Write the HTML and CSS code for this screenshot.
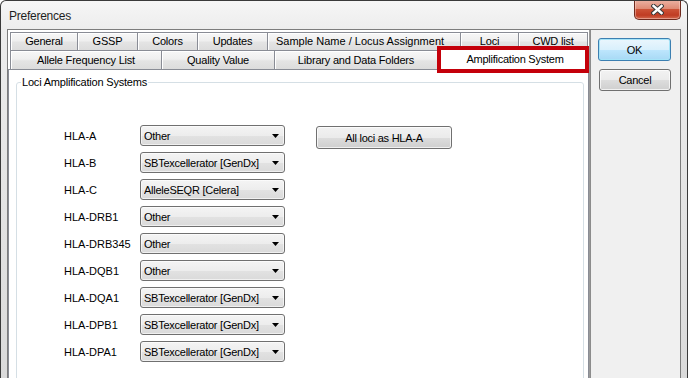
FILE: index.html
```html
<!DOCTYPE html>
<html>
<head>
<meta charset="utf-8">
<title>Preferences</title>
<link rel="stylesheet" href="styles.css">
</head>
<body>
<div class="window">
  <div class="titlebar">
    <span class="title">Preferences</span>
    <div class="close">
      <svg width="13" height="11" viewBox="0 0 13 11">
        <path d="M2.5 2 L10.5 9 M10.5 2 L2.5 9" stroke="#3a3a3a" stroke-width="4.4" stroke-linecap="square" fill="none"/>
        <path d="M2.5 2 L10.5 9 M10.5 2 L2.5 9" stroke="#ffffff" stroke-width="2.4" stroke-linecap="square" fill="none"/>
      </svg>
    </div>
  </div>
  <div class="client">
    <div class="left">
      <div class="tabrow row1">
        <div class="tab w68">General</div>
        <div class="tab w61">GSSP</div>
        <div class="tab w61">Colors</div>
        <div class="tab w71">Updates</div>
        <div class="tab wide w194">Sample Name / Locus Assignment</div>
        <div class="tab w59">Loci</div>
        <div class="tab w70">CWD list</div>
      </div>
      <div class="tabrow row2">
        <div class="tab w152">Allele Frequency List</div>
        <div class="tab w114">Quality Value</div>
        <div class="tab w164">Library and Data Folders</div>
        <div class="tab selected w152">Amplification System<div class="annot"></div></div>
      </div>
      <div class="tabpage">
        <fieldset class="group">
          <legend class="legend">Loci Amplification Systems</legend>
          <div class="grid">
            <div class="label">HLA-A</div>
            <div class="combo"><span class="val">Other</span><svg class="arrow" width="7" height="4" viewBox="0 0 7 4"><path d="M0 0H7L3.5 4Z" fill="#000"/></svg></div>
            <div class="spacer"></div>
            <button class="btn all">All loci as HLA-A</button>

            <div class="label">HLA-B</div>
            <div class="combo"><span class="val">SBTexcellerator [GenDx]</span><svg class="arrow" width="7" height="4" viewBox="0 0 7 4"><path d="M0 0H7L3.5 4Z" fill="#000"/></svg></div>
            <div class="spacer"></div><div class="spacer"></div>

            <div class="label">HLA-C</div>
            <div class="combo"><span class="val">AlleleSEQR [Celera]</span><svg class="arrow" width="7" height="4" viewBox="0 0 7 4"><path d="M0 0H7L3.5 4Z" fill="#000"/></svg></div>
            <div class="spacer"></div><div class="spacer"></div>

            <div class="label">HLA-DRB1</div>
            <div class="combo"><span class="val">Other</span><svg class="arrow" width="7" height="4" viewBox="0 0 7 4"><path d="M0 0H7L3.5 4Z" fill="#000"/></svg></div>
            <div class="spacer"></div><div class="spacer"></div>

            <div class="label">HLA-DRB345</div>
            <div class="combo"><span class="val">Other</span><svg class="arrow" width="7" height="4" viewBox="0 0 7 4"><path d="M0 0H7L3.5 4Z" fill="#000"/></svg></div>
            <div class="spacer"></div><div class="spacer"></div>

            <div class="label">HLA-DQB1</div>
            <div class="combo"><span class="val">Other</span><svg class="arrow" width="7" height="4" viewBox="0 0 7 4"><path d="M0 0H7L3.5 4Z" fill="#000"/></svg></div>
            <div class="spacer"></div><div class="spacer"></div>

            <div class="label">HLA-DQA1</div>
            <div class="combo"><span class="val">SBTexcellerator [GenDx]</span><svg class="arrow" width="7" height="4" viewBox="0 0 7 4"><path d="M0 0H7L3.5 4Z" fill="#000"/></svg></div>
            <div class="spacer"></div><div class="spacer"></div>

            <div class="label">HLA-DPB1</div>
            <div class="combo"><span class="val">SBTexcellerator [GenDx]</span><svg class="arrow" width="7" height="4" viewBox="0 0 7 4"><path d="M0 0H7L3.5 4Z" fill="#000"/></svg></div>
            <div class="spacer"></div><div class="spacer"></div>

            <div class="label">HLA-DPA1</div>
            <div class="combo"><span class="val">SBTexcellerator [GenDx]</span><svg class="arrow" width="7" height="4" viewBox="0 0 7 4"><path d="M0 0H7L3.5 4Z" fill="#000"/></svg></div>
            <div class="spacer"></div><div class="spacer"></div>
          </div>
        </fieldset>
      </div>
    </div>
    <div class="side">
      <button class="btn ok">OK</button>
      <button class="btn cancel">Cancel</button>
    </div>
  </div>
</div>
</body>
</html>
```
FILE: styles.css
```css
html, body {
  margin: 0;
  padding: 0;
  height: 378px;
  overflow: hidden;
  background: #ffffff;
}
body {
  font-family: "Liberation Sans", Arial, sans-serif;
  font-size: 11px;
  color: #000;
}
.window {
  width: 688px;
  height: 378px;
  overflow: hidden;
  box-sizing: border-box;
  border: 1px solid #3a3a3a;
  border-bottom: none;
  border-radius: 6px 6px 0 0;
  background: linear-gradient(to bottom, #f6f6f6 0px, #ececec 30px, #dadada 100%);
  display: flex;
  flex-direction: column;
}
.titlebar {
  height: 28px;
  flex: none;
  display: flex;
  align-items: flex-start;
  padding-left: 8px;
}
.title {
  align-self: center;
  font-size: 12px;
  line-height: 16px;
  letter-spacing: -0.25px;
  color: #1e1e1e;
  margin-top: 1px;
}
.close {
  margin-left: auto;
  margin-right: 6px;
  margin-top: -1px;
  width: 47px;
  height: 20px;
  box-sizing: border-box;
  border: 1px solid #6e2a1e;
  border-top: none;
  border-radius: 0 0 5px 5px;
  background: linear-gradient(to bottom, #ecb3a4 0%, #df8b75 45%, #cc5136 50%, #c03c23 80%, #d2694f 100%);
  box-shadow: inset 0 0 0 1px rgba(255, 220, 210, 0.45);
  display: flex;
  align-items: center;
  justify-content: center;
}
.client {
  flex: 1;
  min-height: 0;
  margin: 0 6px;
  border: 1px solid #7c7c7c;
  border-bottom: none;
  display: flex;
  background: #fff;
}
.left {
  width: 581px;
  flex: none;
  display: flex;
  flex-direction: column;
  padding-top: 2px;
  background: #fff;
  min-height: 0;
}
.tabrow {
  display: flex;
  padding-left: 2px;
  flex: none;
}
.row1 { height: 18px; }
.row2 { height: 19px; }
.tab {
  box-sizing: border-box;
  height: 100%;
  margin-right: -1px;
  border: 1px solid #898c95;
  border-bottom: none;
  background: linear-gradient(to bottom, #f7f7f7 0%, #efefef 45%, #e4e4e4 55%, #dcdcdc 100%);
  box-shadow: inset 1px 1px 0 #ffffff;
  text-align: center;
  white-space: nowrap;
  letter-spacing: -0.2px;
}
.tab.wide {
  letter-spacing: 0;
  text-indent: -8px;
}
.row1 .tab { line-height: 17px; }
.row2 .tab { line-height: 18px; }
.w59 { width: 59px; }
.w61 { width: 61px; }
.w68 { width: 68px; }
.w70 { width: 70px; }
.w71 { width: 71px; }
.w114 { width: 114px; }
.w152 { width: 152px; }
.w164 { width: 164px; }
.w194 { width: 194px; }
.row2 .tab.selected {
  position: relative;
  z-index: 2;
  margin-top: -2px;
  height: 22px;
  line-height: 20px;
  background: #fff;
  box-shadow: none;
  letter-spacing: -0.25px;
  text-indent: 4px;
}
.annot {
  position: absolute;
  left: -1px;
  right: -1px;
  top: -3px;
  bottom: -3px;
  border: 4px solid #c4000a;
}
.tabpage {
  flex: 1;
  min-height: 0;
  overflow: hidden;
  border: 1px solid #898c95;
  border-bottom: none;
  background: #fff;
  display: flex;
  flex-direction: column;
}
.group {
  margin: 6px 4px 0 7px;
  padding: 36px 0 0 4px;
  border: 1px solid #d5dfe5;
  border-radius: 3px;
  flex: none;
  height: 330px;
  box-sizing: border-box;
  min-width: 0;
}
.legend {
  padding: 0 1px;
  line-height: 13px;
  letter-spacing: -0.2px;
  color: #000;
}
.grid {
  display: grid;
  margin-left: 43px;
  grid-template-columns: 76px 145px 31px 136px;
  grid-auto-rows: 21px;
  row-gap: 6px;
}
.label {
  align-self: center;
  white-space: nowrap;
}
.combo {
  box-sizing: border-box;
  height: 21px;
  border: 1px solid #707070;
  border-radius: 3px;
  background: linear-gradient(to bottom, #f4f4f4 0%, #ededed 50%, #e2e2e2 51%, #dadada 100%);
  box-shadow: inset 0 0 0 1px rgba(255, 255, 255, 0.6);
  display: flex;
  align-items: center;
  padding: 0 5px 0 3px;
}
.val {
  flex: 1;
  white-space: nowrap;
  overflow: hidden;
  letter-spacing: -0.25px;
}
.arrow {
  flex: none;
  display: block;
}
.btn {
  font-family: "Liberation Sans", Arial, sans-serif;
  font-size: 11px;
  color: #000;
  box-sizing: border-box;
  border: 1px solid #707070;
  border-radius: 3px;
  background: linear-gradient(to bottom, #f2f2f2 0%, #ebebeb 50%, #dddddd 51%, #cfcfcf 100%);
  box-shadow: inset 0 0 0 1px rgba(255, 255, 255, 0.7);
  padding: 0;
  margin: 0;
  letter-spacing: -0.25px;
}
.all {
  height: 23px;
  margin-top: 1px;
}
.side {
  flex: 1;
  border-left: 1px solid #9a9a9a;
  box-shadow: inset 1px 0 0 #8c8c8c;
  background: #f0f0f0;
  display: flex;
  flex-direction: column;
  align-items: flex-start;
  padding-top: 8px;
}
.ok {
  width: 73px;
  height: 23px;
  margin-left: 8px;
  border-color: #3c7fb1;
  background: linear-gradient(to bottom, #eaf6fd 0%, #d9f0fc 50%, #bee6fd 51%, #a7d9f5 100%);
  box-shadow: inset 0 0 0 1px #a6e4f8;
}
.cancel {
  width: 72px;
  height: 22px;
  margin-left: 9px;
  margin-top: 8px;
}
```
